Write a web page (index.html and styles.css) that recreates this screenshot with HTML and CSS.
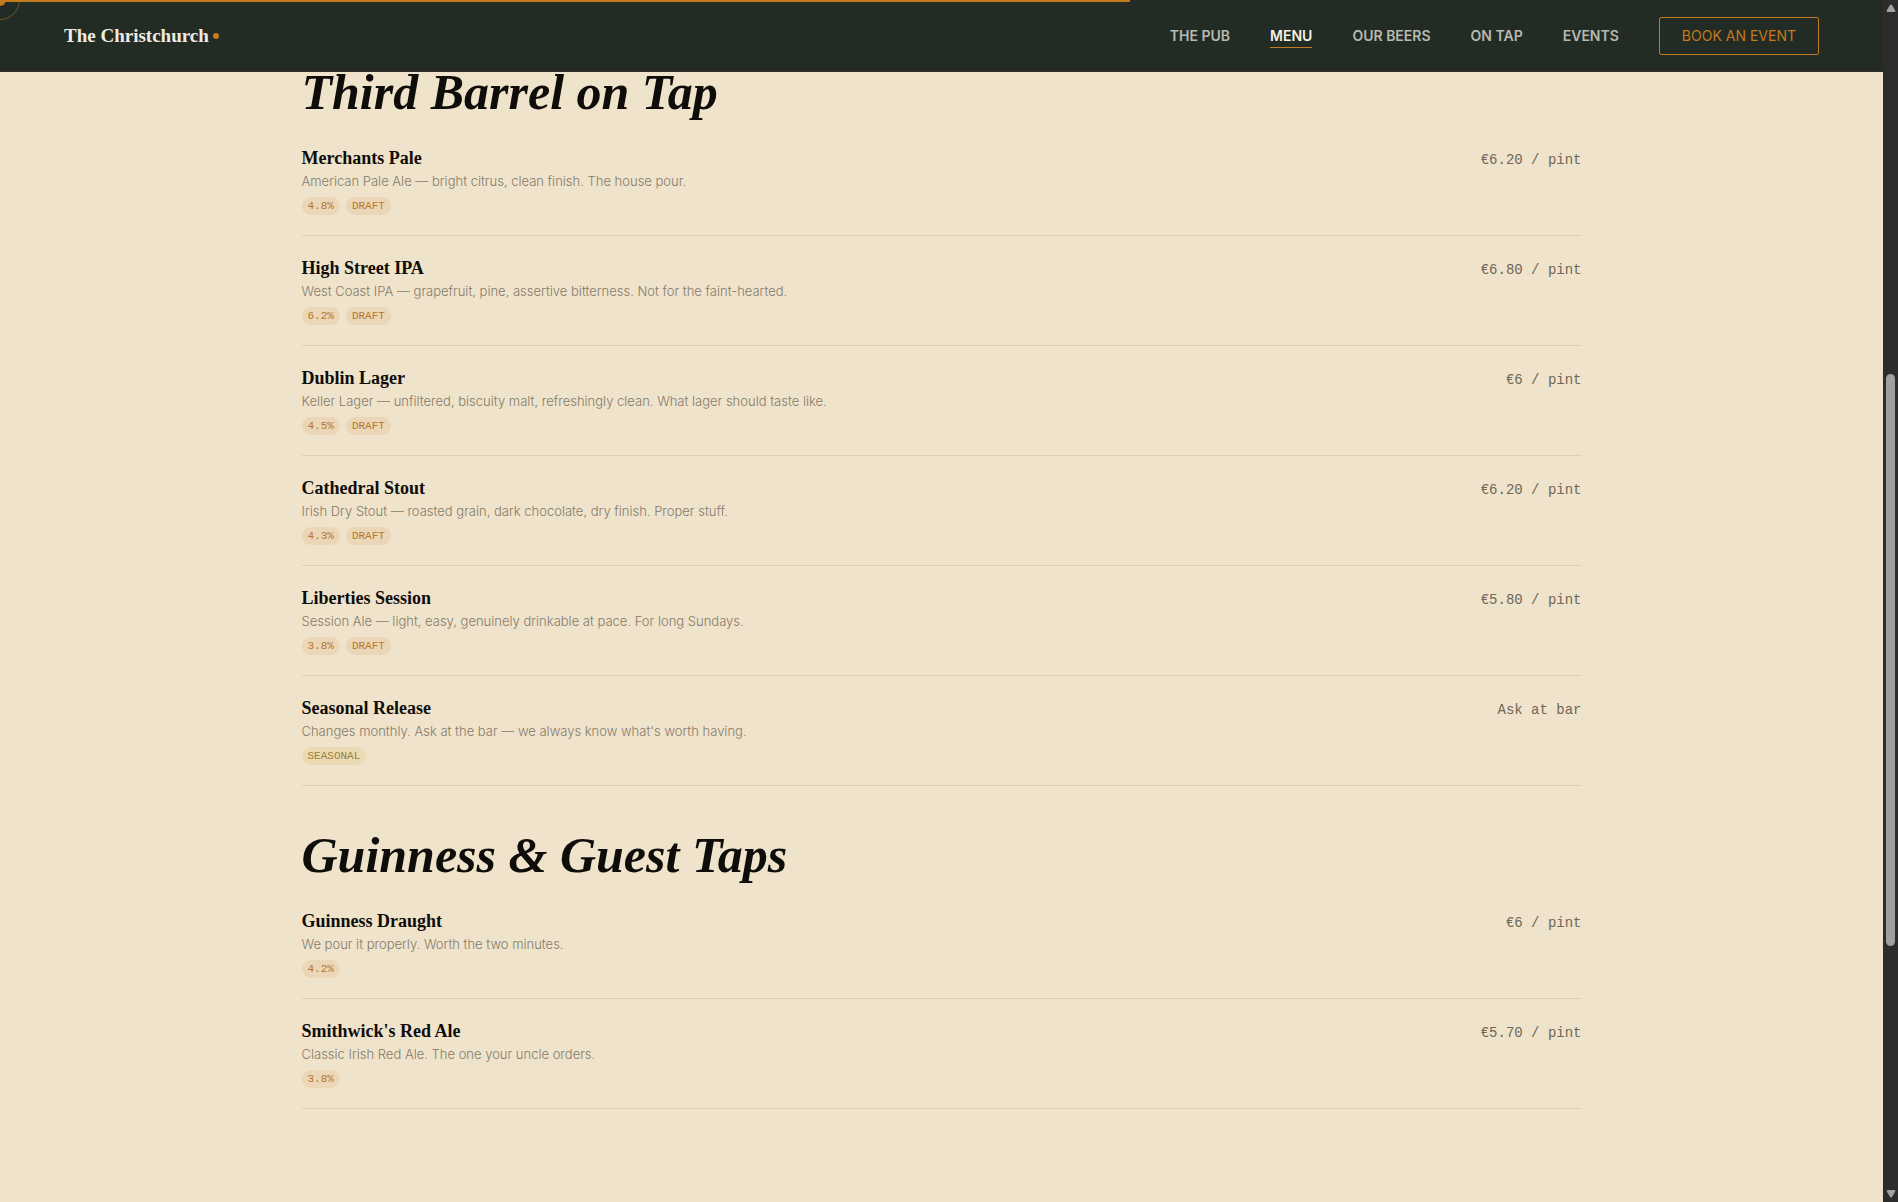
FILE: index.html
```html
<!DOCTYPE html>
<html lang="en">
<head>
  <meta charset="UTF-8">
  <meta name="viewport" content="width=device-width, initial-scale=1.0">
  <title>The Christchurch</title>
  <link rel="stylesheet" href="styles.css">
</head>
<body>

  <div class="page">
    <header class="nav">
      <a class="logo" href="#">The Christchurch<span class="logo-dot"></span></a>
      <nav class="nav-links">
        <a href="#pub">The Pub</a>
        <a href="#menu" class="active">Menu</a>
        <a href="#beers">Our Beers</a>
        <a href="#tap">On Tap</a>
        <a href="#events">Events</a>
        <a href="#book" class="nav-cta">Book an Event</a>
      </nav>
      <div class="progress"></div>
    </header>

    <main class="menu" id="menu">
      <section class="menu-section">
        <h2>Third Barrel on Tap</h2>

        <article class="item">
          <div>
            <h3>Merchants Pale</h3>
            <p class="desc">American Pale Ale — bright citrus, clean finish. The house pour.</p>
            <div class="tags"><span class="tag">4.8%</span><span class="tag">Draft</span></div>
          </div>
          <span class="price">€6.20 / pint</span>
        </article>

        <article class="item">
          <div>
            <h3>High Street IPA</h3>
            <p class="desc">West Coast IPA — grapefruit, pine, assertive bitterness. Not for the faint-hearted.</p>
            <div class="tags"><span class="tag">6.2%</span><span class="tag">Draft</span></div>
          </div>
          <span class="price">€6.80 / pint</span>
        </article>

        <article class="item">
          <div>
            <h3>Dublin Lager</h3>
            <p class="desc">Keller Lager — unfiltered, biscuity malt, refreshingly clean. What lager should taste like.</p>
            <div class="tags"><span class="tag">4.5%</span><span class="tag">Draft</span></div>
          </div>
          <span class="price">€6 / pint</span>
        </article>

        <article class="item">
          <div>
            <h3>Cathedral Stout</h3>
            <p class="desc">Irish Dry Stout — roasted grain, dark chocolate, dry finish. Proper stuff.</p>
            <div class="tags"><span class="tag">4.3%</span><span class="tag">Draft</span></div>
          </div>
          <span class="price">€6.20 / pint</span>
        </article>

        <article class="item">
          <div>
            <h3>Liberties Session</h3>
            <p class="desc">Session Ale — light, easy, genuinely drinkable at pace. For long Sundays.</p>
            <div class="tags"><span class="tag">3.8%</span><span class="tag">Draft</span></div>
          </div>
          <span class="price">€5.80 / pint</span>
        </article>

        <article class="item">
          <div>
            <h3>Seasonal Release</h3>
            <p class="desc">Changes monthly. Ask at the bar — we always know what's worth having.</p>
            <div class="tags"><span class="tag tag-seasonal">Seasonal</span></div>
          </div>
          <span class="price">Ask at bar</span>
        </article>
      </section>

      <section class="menu-section">
        <h2>Guinness &amp; Guest Taps</h2>

        <article class="item">
          <div>
            <h3>Guinness Draught</h3>
            <p class="desc">We pour it properly. Worth the two minutes.</p>
            <div class="tags"><span class="tag">4.2%</span></div>
          </div>
          <span class="price">€6 / pint</span>
        </article>

        <article class="item">
          <div>
            <h3>Smithwick's Red Ale</h3>
            <p class="desc">Classic Irish Red Ale. The one your uncle orders.</p>
            <div class="tags"><span class="tag">3.8%</span></div>
          </div>
          <span class="price">€5.70 / pint</span>
        </article>
      </section>
    </main>
  </div>

  <!-- Scrollbar -->
  <div class="scrollbar">
    <svg class="arrow" viewBox="0 0 10 8"><path d="M4 1Q5 0 6 1L9 6Q10 8 8 8H2Q0 8 1 6Z"/></svg>
    <div class="track"><div class="thumb"></div></div>
    <svg class="arrow" viewBox="0 0 10 8"><path d="M4 7Q5 8 6 7L9 2Q10 0 8 0H2Q0 0 1 2Z"/></svg>
  </div>

  <!-- Custom cursor -->
  <div class="cursor-dot"></div>
  <div class="cursor-ring"></div>

</body>
</html>
```

FILE: styles.css
```css
:root {
  --cream: #efe3cb;
  --green: #222c25;
  --amber: #c47a1e;
  --ink: #0f0d0a;
  --bar: 15px; /* scrollbar width */
}

* {
  box-sizing: border-box;
  margin: 0;
  padding: 0;
}

body {
  min-height: 100vh;
  background: var(--cream);
  color: var(--ink);
  font-family: Inter, "Liberation Sans", sans-serif;
  overflow: hidden;
}

a {
  color: inherit;
  text-decoration: none;
}

.page {
  margin-right: var(--bar);
}

/* Navigation */
.nav {
  position: fixed;
  top: 0;
  left: 0;
  right: var(--bar);
  z-index: 10;
  height: 72px;
  padding: 0 64px;
  display: flex;
  align-items: center;
  justify-content: space-between;
  background: var(--green);
  border-bottom: 1px solid #332f22;
}

.logo {
  display: flex;
  align-items: center;
  gap: 4px;
  font-family: "Liberation Serif", serif;
  font-size: 19px;
  font-weight: 700;
  color: #f0ebe0;
}

.logo-dot {
  width: 6px;
  height: 6px;
  border-radius: 50%;
  background: var(--amber);
}

.nav-links {
  display: flex;
  align-items: center;
  gap: 40px;
  font-size: 14px;
  font-weight: 600;
  line-height: 20px;
  text-transform: uppercase;
  color: #b9b9af;
}

.nav-links .active {
  position: relative;
  color: #f5f0e6;
}

.nav-links .active::after {
  content: "";
  position: absolute;
  left: 0;
  right: 0;
  bottom: -2px;
  height: 1px;
  background: var(--amber);
}

.nav-cta {
  padding: 8px 22px;
  border: 1px solid var(--amber);
  border-radius: 2px;
  color: var(--amber);
  font-weight: 400;
}

.progress {
  position: absolute;
  top: 0;
  left: 0;
  width: 60%;
  height: 2px;
  background: var(--amber);
}

/* Menu */
.menu {
  max-width: 1280px;
  margin: 0 auto;
  padding: 23px 0 92px;
}

.menu-section {
  padding-top: 47px;
}

.menu-section h2 {
  margin-bottom: 12px;
  font-family: "Liberation Serif", serif;
  font-size: 50px;
  font-style: italic;
  font-weight: 700;
  line-height: 44px;
}

.item {
  display: flex;
  align-items: baseline;
  justify-content: space-between;
  gap: 32px;
  padding: 20px 0;
  border-bottom: 1px solid #dccfb8;
}

.item h3 {
  font-family: "Liberation Serif", serif;
  font-size: 18px;
  font-weight: 700;
  line-height: 24px;
}

.desc {
  font-size: 13px;
  font-weight: 300;
  line-height: 22px;
  color: #857b6a;
}

.tags {
  display: flex;
  gap: 6px;
  margin-top: 5px;
}

.tag {
  padding: 0 6px;
  border-radius: 9px;
  background: #ebd7b7;
  color: #b9752a;
  font-family: "Liberation Mono", monospace;
  font-size: 11px;
  line-height: 18px;
  text-transform: uppercase;
}

.tag-seasonal {
  background: #eadbb3;
  color: #98803a;
}

.price {
  font-family: "Liberation Mono", monospace;
  font-size: 14px;
  line-height: 24px;
  color: #6f6657;
  white-space: nowrap;
}

/* Scrollbar */
.scrollbar {
  position: fixed;
  top: 0;
  right: 0;
  bottom: 0;
  width: var(--bar);
  padding: 4px 0;
  display: flex;
  flex-direction: column;
  align-items: center;
  gap: 4px;
  background: #2c2c2c;
}

.arrow {
  width: 10px;
  height: 8px;
  fill: #9f9f9f;
}

.track {
  flex: 1;
  width: 9px;
  display: flex;
  flex-direction: column;
}

.track::before {
  content: "";
  flex: 358;
}

.track::after {
  content: "";
  flex: 240;
}

.thumb {
  flex: 572;
  border-radius: 5px;
  background: #9f9f9f;
}

/* Cursor */
.cursor-dot,
.cursor-ring {
  position: fixed;
  top: 0;
  left: 0;
  z-index: 20;
  border-radius: 50%;
  transform: translate(-50%, -50%);
  pointer-events: none;
}

.cursor-dot {
  width: 12px;
  height: 12px;
  background: var(--amber);
}

.cursor-ring {
  width: 40px;
  height: 40px;
  border: 1px solid rgba(196, 122, 30, 0.5);
}
```
